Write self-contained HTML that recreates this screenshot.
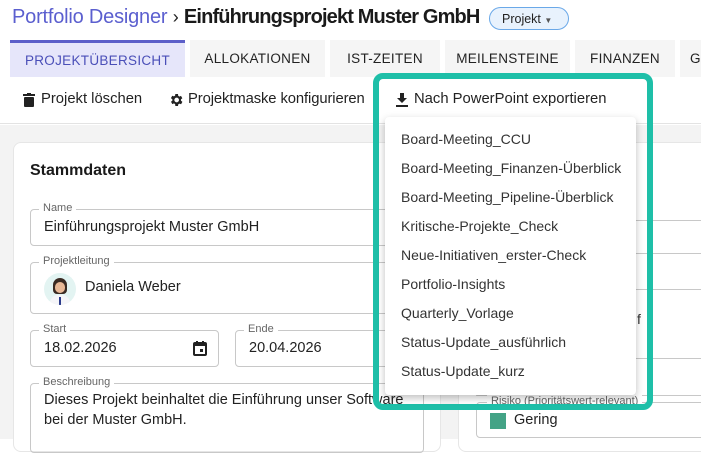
<!DOCTYPE html>
<html><head><meta charset="utf-8"><style>
*{box-sizing:border-box;margin:0;padding:0}
body{width:701px;height:439px;overflow:hidden;font-family:"Liberation Sans",Arial,sans-serif;background:#fff;position:relative;color:#222}
.abs{position:absolute}
.tab{position:absolute;top:40px;height:37px;background:#f5f5f5;font-size:13.5px;color:#222;display:flex;align-items:center;justify-content:center;letter-spacing:.3px}
.fld{position:absolute;border:1px solid #c8c8c8;border-radius:4px}
.lbl{position:absolute;top:-8px;left:8px;background:#fff;padding:0 4px;font-size:11px;color:#666}
.val{position:absolute;font-size:14.5px;color:#222}
.mi{position:absolute;left:401px;font-size:14px;color:#333}
.tb{position:absolute;top:91px;font-size:14.8px}
</style></head><body>
<div class="abs" style="left:12px;top:6px;font-size:20px;letter-spacing:-0.2px;color:#5b5fcf;white-space:nowrap">Portfolio Designer <span style="color:#222;font-size:18px">›</span> <span style="color:#1a1a1a;font-weight:bold;letter-spacing:-0.85px">Einführungsprojekt Muster GmbH</span></div>
<div class="abs" style="left:489px;top:7px;width:80px;height:23px;border:1px solid #6aa8e8;background:#e8f2fd;border-radius:12px;font-size:12.5px;color:#222;padding:4px 0 0 12px">Projekt <span style="font-size:8px;color:#555">▼</span></div>

<div class="tab" style="left:10px;width:175px;background:#e6e6fa;border-top:3px solid #5c5fc9;color:#4a4fb8">PROJEKTÜBERSICHT</div>
<div class="tab" style="left:190px;width:135px">ALLOKATIONEN</div>
<div class="tab" style="left:330px;width:110px">IST-ZEITEN</div>
<div class="tab" style="left:445px;width:125px">MEILENSTEINE</div>
<div class="tab" style="left:575px;width:100px">FINANZEN</div>
<div class="tab" style="left:680px;width:30px;justify-content:flex-start;padding-left:10px">G</div>

<div class="abs" style="left:0;top:77px;width:701px;height:47px;background:#fff;border-bottom:1px solid #e3e3e3"></div>
<svg class="abs" style="left:23px;top:93px" width="12" height="14" viewBox="0 0 12 14"><rect x="0" y="1" width="12" height="2" fill="#222"/><rect x="4" y="0" width="4" height="2" fill="#222"/><rect x="1" y="4" width="10" height="10" rx="1" fill="#222"/></svg>
<div class="tb" style="left:41px">Projekt löschen</div>
<svg class="abs" style="left:168px;top:92px" width="16" height="16" viewBox="0 0 24 24"><path fill="#222" d="M19.4 13a7.5 7.5 0 0 0 0-2l2.1-1.6-2-3.5-2.5 1a7 7 0 0 0-1.7-1L15 3h-4l-.4 2.6a7 7 0 0 0-1.7 1l-2.5-1-2 3.5L6.6 11a7.5 7.5 0 0 0 0 2l-2.1 1.6 2 3.5 2.5-1a7 7 0 0 0 1.7 1L11 21h4l.4-2.6a7 7 0 0 0 1.7-1l2.5 1 2-3.5zM13 15.5a3.5 3.5 0 1 1 0-7 3.5 3.5 0 0 1 0 7z"/></svg>
<div class="tb" style="left:188px;letter-spacing:-0.1px">Projektmaske konfigurieren</div>
<svg class="abs" style="left:395px;top:93px" width="14" height="14" viewBox="0 0 14 14"><path fill="#222" d="M5 0h4v5h3L7 10 2 5h3z"/><rect x="1" y="12" width="12" height="2" fill="#222"/></svg>
<div class="tb" style="left:414px">Nach PowerPoint exportieren</div>

<div class="abs" style="left:0;top:125px;width:701px;height:314px;background:#f3f3f3"></div>
<div class="abs" style="left:13px;top:142px;width:428px;height:310px;background:#fff;border-radius:8px;border:1px solid #e6e6e6"></div>
<div class="abs" style="left:458px;top:142px;width:260px;height:310px;background:#fff;border-radius:8px;border:1px solid #e6e6e6"></div>
<div class="abs" style="left:30px;top:162px;font-size:16px;font-weight:bold;color:#1a1a1a">Stammdaten</div>

<div class="fld" style="left:30px;top:209px;width:394px;height:37px"><span class="lbl">Name</span><span class="val" style="left:13px;top:9px">Einführungsprojekt Muster GmbH</span></div>
<div class="fld" style="left:30px;top:262px;width:394px;height:52px"><span class="lbl">Projektleitung</span>
<div class="abs" style="left:13px;top:10px;width:32px;height:32px;border-radius:50%;background:#e3f4f2;overflow:hidden"><div class="abs" style="left:9px;top:5px;width:14px;height:16px;border-radius:7px 7px 4px 4px;background:#3a2a22"></div><div class="abs" style="left:11px;top:9px;width:10px;height:11px;border-radius:5px;background:#e8b896"></div><div class="abs" style="left:6px;top:22px;width:20px;height:12px;border-radius:8px 8px 0 0;background:#f5f5f8"></div><div class="abs" style="left:15px;top:24px;width:2px;height:8px;background:#2a3a8a"></div></div>
<span class="val" style="left:54px;top:16px">Daniela Weber</span></div>
<div class="fld" style="left:30px;top:330px;width:189px;height:37px"><span class="lbl">Start</span><span class="val" style="left:13px;top:9px">18.02.2026</span>
<svg class="abs" style="left:162px;top:10px" width="14" height="15" viewBox="0 0 14 15"><rect x="1" y="2" width="12" height="12" rx="1" fill="none" stroke="#222" stroke-width="2"/><rect x="1" y="2" width="12" height="3" fill="#222"/><rect x="3" y="0" width="2" height="3" fill="#222"/><rect x="9" y="0" width="2" height="3" fill="#222"/><rect x="7" y="8" width="3" height="3" fill="#222"/></svg></div>
<div class="fld" style="left:235px;top:330px;width:189px;height:37px"><span class="lbl">Ende</span><span class="val" style="left:13px;top:9px">20.04.2026</span></div>
<div class="fld" style="left:30px;top:383px;width:394px;height:70px"><span class="lbl">Beschreibung</span><span class="val" style="left:13px;top:6px;line-height:20px">Dieses Projekt beinhaltet die Einführung unser Software<br>bei der Muster GmbH.</span></div>

<div class="fld" style="left:476px;top:220px;width:240px;height:34px"></div>
<div class="fld" style="left:476px;top:289px;width:240px;height:70px"></div>
<div class="abs" style="left:637px;top:311px;font-size:14px;color:#333">f</div>
<div class="fld" style="left:476px;top:395px;width:240px;height:1px;border-width:1px 0 0 0"></div>
<div class="fld" style="left:476px;top:402px;width:240px;height:36px"><span class="lbl" style="left:10px">Risiko (Prioritätswert-relevant)</span><div class="abs" style="left:13px;top:10px;width:16px;height:16px;background:#44a386"></div><span class="val" style="left:37px;top:9px">Gering</span></div>

<div class="abs" style="left:373px;top:73px;width:280px;height:337px;border:6px solid #1ebfa8;border-radius:10px"></div>
<div class="abs" style="left:385px;top:117px;width:251px;height:278px;background:#fff;border-radius:4px;box-shadow:0 3px 8px rgba(0,0,0,.25)"></div>
<div class="mi" style="top:131px">Board-Meeting_CCU</div>
<div class="mi" style="top:160px">Board-Meeting_Finanzen-Überblick</div>
<div class="mi" style="top:189px">Board-Meeting_Pipeline-Überblick</div>
<div class="mi" style="top:218px">Kritische-Projekte_Check</div>
<div class="mi" style="top:247px">Neue-Initiativen_erster-Check</div>
<div class="mi" style="top:276px">Portfolio-Insights</div>
<div class="mi" style="top:305px">Quarterly_Vorlage</div>
<div class="mi" style="top:334px">Status-Update_ausführlich</div>
<div class="mi" style="top:363px">Status-Update_kurz</div>
</body></html>
